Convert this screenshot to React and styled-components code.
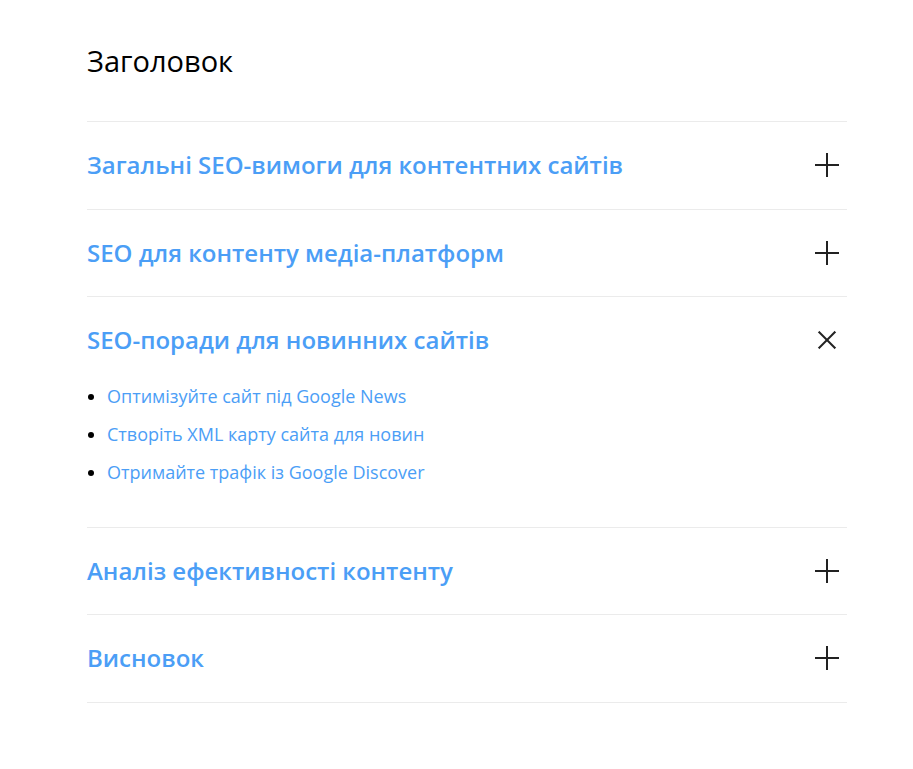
import React, {useState} from 'react';
import styled, {createGlobalStyle} from 'styled-components';

const GlobalStyle = createGlobalStyle`
  body {
    margin: 0;
    background: #ffffff;
    font-family: "Open Sans", "Noto Sans", sans-serif;
  }
`;

const Page = styled.div`
  padding: 41px 66px 60px 87px;
`;

const Title = styled.h2`
  margin: 0 0 40px;
  font-size: 29px;
  line-height: 40px;
  font-weight: 400;
  color: #000;
`;

const Accordion = styled.div`
  border-bottom: 1px solid #ebebeb;
`;

const Item = styled.div`
  border-top: 1px solid #ebebeb;
`;

const Header = styled.button`
  display: flex;
  align-items: center;
  justify-content: space-between;
  width: 100%;
  height: 86.5px;
  padding: 0 8px 0 0;
  border: 0;
  background: none;
  cursor: pointer;
  font-family: inherit;
  text-align: left;
`;

const Question = styled.span`
  font-size: 24px;
  line-height: 32px;
  font-weight: 600;
  color: #4b9ef6;
`;

const Toggle = styled.svg`
  width: 24px;
  height: 24px;
  flex: none;
  transform: rotate(${p => (p.$open ? 45 : 0)}deg);
  transition: transform 0.2s ease;
`;

const Panel = styled.div`
  margin-top: -1px;
  padding: 0 0 42px;
`;

const List = styled.ul`
  margin: 0;
  padding-left: 20px;
  color: #000;
`;

const Point = styled.li`
  font-size: 18px;
  line-height: 26px;
  & + & {
    margin-top: 12px;
  }
`;

const PointLink = styled.a`
  color: #4b9ef6;
  text-decoration: none;
`;

const items = [
  {title: 'Загальні SEO-вимоги для контентних сайтів', points: []},
  {title: 'SEO для контенту медіа-платформ', points: []},
  {
    title: 'SEO-поради для новинних сайтів',
    points: [
      'Оптимізуйте сайт під Google News',
      'Створіть XML карту сайта для новин',
      'Отримайте трафік із Google Discover',
    ],
  },
  {title: 'Аналіз ефективності контенту', points: []},
  {title: 'Висновок', points: []},
];

const PlusIcon = ({open}) => (
  <Toggle $open={open} viewBox="0 0 24 24" fill="none" stroke="#222" strokeWidth="2">
    <line x1="12" y1="0" x2="12" y2="24"/>
    <line x1="0" y1="12" x2="24" y2="12"/>
  </Toggle>
);

export default function App() {
  const [open, setOpen] = useState(2);

  return (
    <Page>
      <GlobalStyle/>
      <Title>Заголовок</Title>
      <Accordion>
        {items.map((item, i) => (
          <Item key={item.title}>
            <Header onClick={() => setOpen(open === i ? -1 : i)}>
              <Question>{item.title}</Question>
              <PlusIcon open={open === i}/>
            </Header>
            {open === i && (
              <Panel>
                <List>
                  {item.points.map(p => (
                    <Point key={p}><PointLink href="#">{p}</PointLink></Point>
                  ))}
                </List>
              </Panel>
            )}
          </Item>
        ))}
      </Accordion>
    </Page>
  );
}
